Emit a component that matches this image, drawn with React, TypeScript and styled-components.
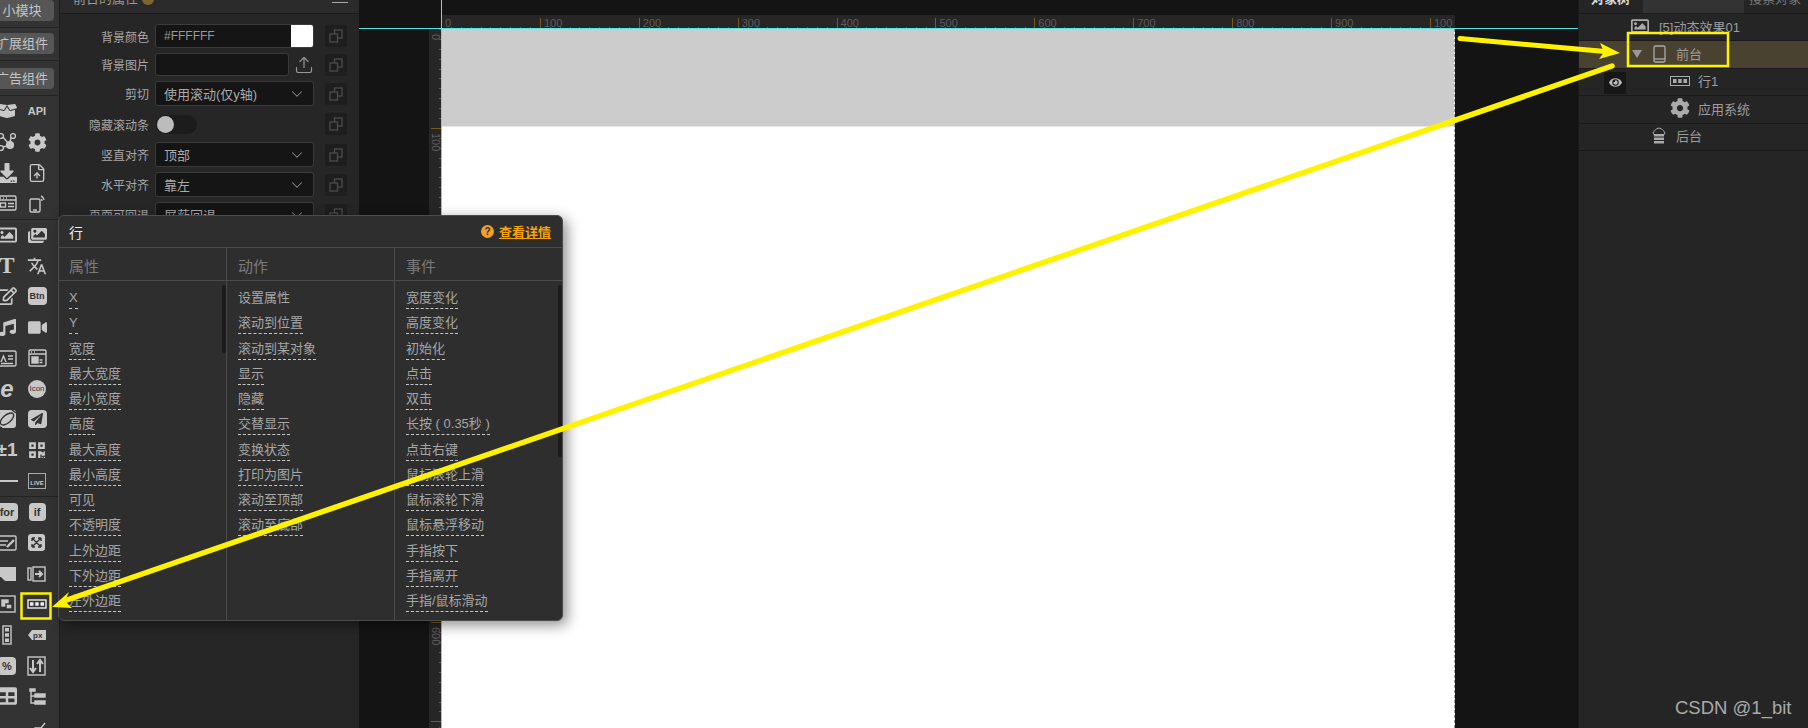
import React from "react";
import styled, { createGlobalStyle } from "styled-components";
import { ChevronDown, Upload, FileUp } from "lucide-react";
import {
  FaBoxOpen,
  FaCog,
  FaDownload,
  FaRegImage,
  FaImages,
  FaRegEdit,
  FaMusic,
  FaVideo,
  FaPaperPlane,
  FaQrcode,
  FaTable,
  FaEye,
} from "react-icons/fa";
import { MdTranslate } from "react-icons/md";

const FONT = `"Liberation Sans", "Noto Sans CJK SC", sans-serif`;
const YELLOW = "#fff200";

const GlobalStyle = createGlobalStyle`
  html, body {
    margin: 0;
    padding: 0;
    background: #141414;
    overflow: hidden;
  }
  * { box-sizing: border-box; }
`;

const Page = styled.div`
  position: relative;
  width: 1808px;
  height: 728px;
  display: flex;
  overflow: hidden;
  font-family: ${FONT};
  font-size: 13px;
`;

/* left toolbar */
const Toolbar = styled.div`
  width: 59px;
  flex: none;
  background: #333;
  overflow: hidden;
`;

const ModuleButton = styled.div`
  margin: 0 5px 6px -10px;
  height: 21px;
  background: #565656;
  border-radius: 4px;
  color: #c4c4c4;
  font-size: 13px;
  line-height: 21px;
  text-align: center;
  white-space: nowrap;
`;

const Separator = styled.div<{ $after?: number }>`
  height: 1px;
  width: 58px;
  background: #232323;
  margin-bottom: ${(p) => p.$after ?? 0}px;
`;

const IconGrid = styled.div`
  display: grid;
  grid-template-columns: 30px 30px;
  grid-auto-rows: 30.7px;
  margin-left: -8px;
  color: #c8c8c8;
`;

const IconCell = styled.div`
  display: flex;
  align-items: center;
  justify-content: center;
  min-width: 0;
  overflow: visible;
  svg { display: block; flex: none; }
`;

const Pill = styled.span<{ $w: number; $size?: number }>`
  display: block;
  width: ${(p) => p.$w}px;
  height: 18px;
  background: #c8c8c8;
  border-radius: 4px;
  color: #333;
  font-size: ${(p) => p.$size ?? 11}px;
  font-weight: bold;
  line-height: 18px;
  text-align: center;
  white-space: nowrap;
  flex: none;
`;

const BoldGlyph = styled.span<{ $size: number; $serif?: boolean }>`
  font-family: ${(p) => (p.$serif ? `"Liberation Serif", serif` : `"Liberation Sans", sans-serif`)};
  font-size: ${(p) => p.$size}px;
  font-weight: bold;
  line-height: 1;
  white-space: nowrap;
`;

const RoundLabel = styled.span`
  width: 18px;
  height: 18px;
  border-radius: 50%;
  background: #c8c8c8;
  color: #333;
  font-size: 8px;
  line-height: 18px;
  text-align: center;
  flex: none;
`;

const LiveBox = styled.span`
  width: 18px;
  height: 16px;
  border: 1px solid #aaa;
  color: #ccc;
  font-size: 6px;
  font-weight: bold;
  line-height: 18px;
  text-align: center;
  flex: none;
`;

const LineGlyph = styled.span`
  width: 22px;
  height: 2px;
  background: #c8c8c8;
  flex: none;
`;

const S = ({ children, w = 20, h = 20, vb = "0 0 20 20" }: { children: React.ReactNode; w?: number; h?: number; vb?: string }) => (
  <svg width={w} height={h} viewBox={vb} fill="none" stroke="currentColor" strokeWidth="1.4">
    {children}
  </svg>
);

const toolbarTop: React.ReactNode[] = [
  <FaBoxOpen size={20} />,
  <BoldGlyph $size={11}>API</BoldGlyph>,
  <S>
    <circle cx="4" cy="4" r="2.4" />
    <circle cx="16" cy="4" r="2.4" />
    <circle cx="4" cy="16" r="2.4" />
    <circle cx="13" cy="13" r="3.4" fill="currentColor" />
    <path d="M6 5l5 6M14 6l-1 4M6 15l4-1" />
  </S>,
  <FaCog size={19} />,
  <FaDownload size={20} />,
  <FileUp size={20} strokeWidth={1.6} />,
  <S>
    <rect x="1" y="3" width="18" height="14" rx="1.5" />
    <path d="M1 7h18M3 5h1M6 5h1M9 5h1" />
    <rect x="3.5" y="10" width="5" height="4" />
    <path d="M11 10.5h6M11 13.5h6" />
  </S>,
  <S>
    <rect x="3" y="6" width="10" height="13" rx="1.5" />
    <path d="M6 17h4M14 3a5 5 0 0 1 3 4M14 6a2 2 0 0 1 1 2" />
  </S>,
];

const toolbarMiddle: React.ReactNode[] = [
  <FaRegImage size={20} />,
  <FaImages size={19} />,
  <BoldGlyph $size={23} $serif>T</BoldGlyph>,
  <MdTranslate size={20} />,
  <FaRegEdit size={20} />,
  <Pill $w={19} $size={9}>Btn</Pill>,
  <FaMusic size={17} />,
  <FaVideo size={19} />,
  <S>
    <rect x="1" y="3" width="18" height="15" rx="1.5" />
    <path d="M4 14l2.5-6 2.5 6M11 8h5M11 11h5M4 15.5h12" />
  </S>,
  <S>
    <rect x="2" y="2" width="17" height="16" rx="1.5" />
    <path d="M2 6h17M4 4h1M7 4h1" />
    <rect x="5" y="9" width="6" height="6" fill="currentColor" />
    <path d="M12.5 12h3M12.5 14.5h3" />
  </S>,
  <BoldGlyph $size={24}>
    <i>e</i>
  </BoldGlyph>,
  <RoundLabel>Icon</RoundLabel>,
  <S>
    <rect x="1" y="1" width="18" height="18" rx="3" fill="currentColor" stroke="none" />
    <ellipse cx="10" cy="10" rx="8" ry="4" transform="rotate(-40 10 10)" stroke="#333" />
    <path d="M1 17L5 19M15 1l4 3" stroke="#333" />
  </S>,
  <Pill $w={19}>
    <FaPaperPlane size={12} style={{ marginTop: 3, marginLeft: 3 }} color="#333" />
  </Pill>,
  <BoldGlyph $size={19}>±1</BoldGlyph>,
  <FaQrcode size={18} />,
  <LineGlyph />,
  <LiveBox>LIVE</LiveBox>,
];

const toolbarBottom: React.ReactNode[] = [
  <Pill $w={22}>for</Pill>,
  <Pill $w={17}>if</Pill>,
  <S>
    <rect x="1" y="3" width="18" height="14" rx="1" />
    <path d="M3 8h8M3 12h6" />
    <path d="M10 14l7-7" strokeWidth="2.4" />
  </S>,
  <S>
    <rect x="1" y="1" width="17" height="17" rx="3" fill="currentColor" stroke="none" />
    <path d="M5 5l9 9M14 5l-9 9M5 5h3M5 5v3M14 14h-3M14 14v-3M14 5h-3M14 5v3M5 14h3M5 14v-3" stroke="#333" />
  </S>,
  <S>
    <path d="M1 3h18v14H8l-4-4H1z" fill="currentColor" stroke="none" />
  </S>,
  <S>
    <rect x="1" y="4" width="3" height="12" />
    <rect x="6" y="3" width="12" height="14" />
    <path d="M8 10h6M12 7l3 3-3 3" strokeWidth="2" />
  </S>,
  <S>
    <rect x="1" y="2" width="17" height="16" />
    <rect x="5" y="6" width="6" height="6" fill="currentColor" />
    <rect x="9" y="10" width="6" height="5" fill="currentColor" stroke="#333" />
  </S>,
  <S w={20} h={10} vb="0 0 20 10">
    <rect x="1" y="1" width="18" height="8" stroke="#eee" />
    <path d="M3 5h3.5M8.2 5h3.5M13.5 5h3.5" stroke="#eee" strokeWidth="3.4" />
  </S>,
  <S w={10} h={20} vb="0 0 10 20">
    <rect x="1" y="1" width="8" height="18" />
    <path d="M5 3v3.5M5 8.2v3.5M5 13.5v3.5" strokeWidth="4" />
  </S>,
  <S>
    <path d="M1 10l4-5h14v10H5z" fill="currentColor" stroke="none" />
    <text x="6" y="13" fontSize="8" fontWeight="bold" fill="#333" stroke="none">px</text>
  </S>,
  <Pill $w={18}>%</Pill>,
  <S>
    <rect x="1" y="1" width="17" height="18" />
    <path d="M6 4v12M3 12l3 4 3-4M13 16V4M10 8l3-4 3 4" strokeWidth="2" />
  </S>,
  <FaTable size={20} />,
  <S>
    <path d="M3 3h5v2H3zM8 8h10v3H8zM8 15h10v3H8z" fill="currentColor" />
    <path d="M4 5v12h4M4 10h4" />
  </S>,
  <span />,
  <S>
    <path d="M2 18l6-7h6l4-5" />
  </S>,
];

/* property panel */
const PropPanel = styled.div`
  width: 300px;
  flex: none;
  background: #262626;
  border-left: 1px solid #1d1d1d;
`;

const PanelHeader = styled.div`
  height: 14px;
  background: #2b2b2b;
  border-bottom: 1px solid #1a1a1a;
  display: flex;
  align-items: flex-end;
  overflow: hidden;
  padding: 0 11px 5px 13px;
  color: #999;
`;

const PanelTitle = styled.span`
  flex: 1;
  display: flex;
  align-items: center;
  gap: 4px;
  line-height: 18px;
  white-space: nowrap;
`;

const TitleBadge = styled.span`
  width: 12px;
  height: 12px;
  border-radius: 50%;
  background: #7f6530;
`;

const MenuLines = styled.span`
  align-self: flex-start;
  width: 16px;
  height: 3px;
  border-bottom: 1px solid #aaa;
`;

const PropList = styled.div`
  padding-top: 10px;
  display: flex;
  flex-direction: column;
  gap: 5px;
`;

const PropRow = styled.div<{ $h: number }>`
  height: ${(p) => p.$h}px;
  display: flex;
  align-items: center;
`;

const PropLabel = styled.label`
  width: 89px;
  margin-right: 6px;
  text-align: right;
  color: #a8a8a8;
  font-size: 12px;
  white-space: nowrap;
`;

const Field = styled.div<{ $w?: number }>`
  width: ${(p) => p.$w ?? 159}px;
  height: 100%;
  flex: none;
  background: #151515;
  border: 1px solid #3a3a3a;
  border-radius: 3px;
  color: #aaa;
  display: flex;
  align-items: center;
  padding-left: 8px;
  overflow: hidden;
`;

const HexText = styled.span`
  flex: 1;
  font-size: 12px;
  color: #999;
`;

const Swatch = styled.span`
  width: 22px;
  height: 100%;
  background: #fff;
`;

const SelectText = styled.span`
  flex: 1;
  white-space: nowrap;
`;

const Chevron = styled(ChevronDown)`
  color: #888;
  margin-right: 7px;
`;

const UploadButton = styled.div`
  width: 25px;
  flex: none;
  display: flex;
  justify-content: flex-end;
  color: #999;
`;

const Toggle = styled.div`
  width: 41px;
  height: 19px;
  flex: none;
  margin-left: 1px;
  padding: 1px;
  border-radius: 10px;
  background: #1c1c1c;
`;

const ToggleKnob = styled.div`
  width: 17px;
  height: 17px;
  border-radius: 50%;
  background: #bcbcbc;
`;

const RowSpacer = styled.div`
  width: 117px;
  flex: none;
`;

const CopyBox = styled.div`
  width: 22px;
  height: 22px;
  margin-left: 11px;
  flex: none;
  background: #1e1e1e;
  border-radius: 3px;
  color: #4c4c4c;
  display: flex;
  align-items: center;
  justify-content: center;
`;

const CopyIcon = () => (
  <CopyBox>
    <svg width="14" height="14" viewBox="0 0 14 14" fill="none" stroke="currentColor" strokeWidth="1.3">
      <rect x="5.5" y="1" width="7.5" height="8" />
      <rect x="1" y="5" width="7.5" height="8" fill="#1e1e1e" />
    </svg>
  </CopyBox>
);

/* canvas */
const Canvas = styled.div`
  position: relative;
  width: 1219px;
  flex: none;
  background: #141414;
  display: grid;
  grid-template-columns: 70px 12px 1014px 1fr;
  grid-template-rows: 15px 14px 1fr;
  overflow: hidden;
`;

const RulerTop = styled.div`
  grid-column: 3;
  grid-row: 2;
  display: flex;
  overflow: hidden;
  background-color: #262626;
  background-image: repeating-linear-gradient(90deg, #5a5a5a 0 1px, transparent 1px 9.89px);
  background-size: 100% 2px;
  background-position: bottom;
  background-repeat: no-repeat;
`;

const RulerTopCell = styled.div`
  width: 98.9px;
  flex: none;
  height: 10px;
  margin-top: 3px;
  border-left: 1px solid #7a5a1c;
  padding-left: 3px;
  color: #5c5c5c;
  font-size: 11px;
  line-height: 10px;
`;

const RulerLeft = styled.div`
  grid-column: 2;
  grid-row: 3;
  overflow: hidden;
  background-color: #262626;
  background-image: repeating-linear-gradient(180deg, #5a5a5a 0 1px, transparent 1px 9.89px);
  background-size: 2px 100%;
  background-position: right;
  background-repeat: no-repeat;
`;

const RulerLeftCell = styled.div`
  height: 98.9px;
  margin-left: 2px;
  border-top: 1px solid #7a5a1c;
  padding-top: 4px;
  color: #5c5c5c;
  font-size: 11px;
  line-height: 10px;
  writing-mode: vertical-rl;

  &:first-child {
    border-top-color: transparent;
  }
`;

const Sheet = styled.div`
  grid-column: 3;
  grid-row: 3;
  background: #fff;
  border-left: 1px dashed #999;
  border-right: 1px dashed #999;
`;

const SheetTop = styled.div`
  height: 98px;
  background: #ccc;
  border-bottom: 1px solid #e8e8e8;
`;

const GuideH = styled.div`
  position: absolute;
  left: 0;
  right: 0;
  top: 28px;
  height: 1px;
  background: #4fe6e6;
`;

const GuideV = styled.div`
  position: absolute;
  left: 82px;
  top: 0;
  bottom: 0;
  width: 1px;
  background: #4fe6e6;
`;

/* object tree */
const TreePanel = styled.div`
  flex: 1;
  background: #252525;
  border-left: 1px solid #1a1a1a;
`;

const TreeTabs = styled.div`
  height: 14px;
  display: flex;
  border-bottom: 1px solid #1a1a1a;
  overflow: hidden;
`;

const TreeTab = styled.div<{ $w?: number; $bg: string; $color: string; $pad: number }>`
  ${(p) => (p.$w ? `width: ${p.$w}px;` : "flex: 1;")}
  background: ${(p) => p.$bg};
  color: ${(p) => p.$color};
  display: flex;
  align-items: flex-end;
  padding: 0 0 5px ${(p) => p.$pad}px;
  line-height: 18px;
  white-space: nowrap;
  font-weight: ${(p) => (p.$w === 64 ? "bold" : "normal")};
`;

const TreeRow = styled.div<{ $indent: number; $selected?: boolean }>`
  position: relative;
  height: 27.4px;
  display: flex;
  align-items: center;
  padding: 0 0 2px ${(p) => p.$indent}px;
  gap: 8px;
  background: ${(p) => (p.$selected ? "#4a4230" : "transparent")};
  border-bottom: 1px solid #1a1a1a;
  color: #9c9c9c;
  white-space: nowrap;
`;

const TreeIcon = styled.span<{ $w: number }>`
  width: ${(p) => p.$w}px;
  display: flex;
  justify-content: center;
  color: #aaa;
  flex: none;
`;

const Triangle = styled.span`
  width: 0;
  height: 0;
  border-left: 5px solid transparent;
  border-right: 5px solid transparent;
  border-top: 8px solid #999;
`;

const EyeBadge = styled.span`
  position: absolute;
  left: 25px;
  top: 3px;
  width: 22px;
  height: 22px;
  background: #171717;
  color: #bbb;
  display: flex;
  align-items: center;
  justify-content: center;
`;

/* popup */
const Popup = styled.div`
  position: absolute;
  left: 58px;
  top: 215px;
  width: 505px;
  height: 406px;
  background: #2e2e2e;
  border: 1px solid #4c4c4c;
  border-radius: 6px;
  box-shadow: 4px 4px 14px rgba(0, 0, 0, 0.45);
  display: flex;
  flex-direction: column;
`;

const PopupHeader = styled.div`
  height: 32px;
  flex: none;
  padding: 0 11px 0 10px;
  display: flex;
  align-items: center;
  justify-content: space-between;
  border-bottom: 1px solid #4a4a4a;
  color: #eee;
  font-size: 14px;
`;

const DetailLink = styled.a`
  display: flex;
  align-items: center;
  gap: 5px;
  color: #f7a30b;
  font-size: 13px;
  font-weight: bold;
  text-decoration: underline;
`;

const HelpDot = styled.span`
  width: 13px;
  height: 13px;
  border-radius: 50%;
  background: #f0a030;
  color: #2e2e2e;
  font-size: 10px;
  font-weight: bold;
  line-height: 13px;
  text-align: center;
`;

const PopupColumns = styled.div`
  flex: 1;
  display: grid;
  grid-template-columns: 167px 168px 1fr;
`;

const PopupColumn = styled.div`
  position: relative;
  border-left: 1px solid #4a4a4a;

  &:first-child {
    border-left: 0;
  }
`;

const ColumnHead = styled.div<{ $first?: boolean }>`
  height: 33px;
  padding-left: ${(p) => (p.$first ? 10 : 11)}px;
  border-bottom: 1px solid #4a4a4a;
  color: #7a7a7a;
  font-size: 15px;
  line-height: 37px;
`;

const ItemList = styled.ul<{ $first?: boolean }>`
  margin: 0;
  padding: 6px 0 0 ${(p) => (p.$first ? 10 : 11)}px;
  list-style: none;
`;

const Item = styled.li`
  height: 25.25px;
`;

const ItemText = styled.span<{ $plain?: boolean }>`
  display: inline-block;
  height: 22px;
  line-height: 21px;
  color: #a6a6a6;
  white-space: nowrap;
  border-bottom: 1px dashed ${(p) => (p.$plain ? "transparent" : "#c8c8c8")};
`;

const ScrollThumb = styled.div<{ $height: number }>`
  position: absolute;
  right: 0;
  top: 37px;
  width: 4px;
  height: ${(p) => p.$height}px;
  border-radius: 2px;
  background: #1c1c1c;
`;

/* annotations */
const Overlay = styled.svg`
  position: absolute;
  left: 0;
  top: 0;
  pointer-events: none;
`;

const Watermark = styled.div`
  position: absolute;
  left: 1675px;
  top: 698px;
  color: #aaa;
  font-family: "Liberation Sans", sans-serif;
  font-size: 18.5px;
  line-height: 20px;
`;

const rulerMarks = [0, 100, 200, 300, 400, 500, 600, 700, 800, 900, 100];
const rulerLeftMarks = [0, 100, 200, 300, 400, 500, 600, 700];

const attrs = ["X", "Y", "宽度", "最大宽度", "最小宽度", "高度", "最大高度", "最小高度", "可见", "不透明度", "上外边距", "下外边距", "左外边距"];
const actions = ["设置属性", "滚动到位置", "滚动到某对象", "显示", "隐藏", "交替显示", "变换状态", "打印为图片", "滚动至顶部", "滚动至底部"];
const events = ["宽度变化", "高度变化", "初始化", "点击", "双击", "长按 ( 0.35秒 )", "点击右键", "鼠标滚轮上滑", "鼠标滚轮下滑", "鼠标悬浮移动", "手指按下", "手指离开", "手指/鼠标滑动"];

const selects: [string, string][] = [
  ["竖直对齐", "顶部"],
  ["水平对齐", "靠左"],
  ["页面可回退", "屏蔽回退"],
];

export default function App() {
  return (
    <Page>
      <GlobalStyle />
      <Toolbar>
        <ModuleButton>小模块</ModuleButton>
        <Separator $after={5} />
        <ModuleButton>扩展组件</ModuleButton>
        <Separator $after={7} />
        <ModuleButton>广告组件</ModuleButton>
        <Separator />
        <IconGrid>
          {toolbarTop.map((icon, i) => (
            <IconCell key={i}>{icon}</IconCell>
          ))}
        </IconGrid>
        <Separator />
        <IconGrid>
          {toolbarMiddle.map((icon, i) => (
            <IconCell key={i}>{icon}</IconCell>
          ))}
        </IconGrid>
        <Separator />
        <IconGrid>
          {toolbarBottom.map((icon, i) => (
            <IconCell key={i}>{icon}</IconCell>
          ))}
        </IconGrid>
      </Toolbar>

      <PropPanel>
        <PanelHeader>
          <PanelTitle>
            前台的属性
            <TitleBadge />
          </PanelTitle>
          <MenuLines />
        </PanelHeader>
        <PropList>
          <PropRow $h={24}>
            <PropLabel>背景颜色</PropLabel>
            <Field>
              <HexText>#FFFFFF</HexText>
              <Swatch />
            </Field>
            <CopyIcon />
          </PropRow>
          <PropRow $h={23}>
            <PropLabel>背景图片</PropLabel>
            <Field $w={134} />
            <UploadButton>
              <Upload size={20} strokeWidth={1.4} />
            </UploadButton>
            <CopyIcon />
          </PropRow>
          <PropRow $h={25}>
            <PropLabel>剪切</PropLabel>
            <Field>
              <SelectText>使用滚动(仅y轴)</SelectText>
              <Chevron size={18} strokeWidth={1.4} />
            </Field>
            <CopyIcon />
          </PropRow>
          <PropRow $h={26}>
            <PropLabel>隐藏滚动条</PropLabel>
            <Toggle>
              <ToggleKnob />
            </Toggle>
            <RowSpacer />
            <CopyIcon />
          </PropRow>
          {selects.map(([label, value]) => (
            <PropRow $h={25} key={label}>
              <PropLabel>{label}</PropLabel>
              <Field>
                <SelectText>{value}</SelectText>
                <Chevron size={18} strokeWidth={1.4} />
              </Field>
              <CopyIcon />
            </PropRow>
          ))}
        </PropList>
      </PropPanel>

      <Canvas>
        <RulerTop>
          {rulerMarks.map((n, i) => (
            <RulerTopCell key={i}>{n}</RulerTopCell>
          ))}
        </RulerTop>
        <RulerLeft>
          {rulerLeftMarks.map((n) => (
            <RulerLeftCell key={n}>{n}</RulerLeftCell>
          ))}
        </RulerLeft>
        <Sheet>
          <SheetTop />
        </Sheet>
        <GuideH />
        <GuideV />
      </Canvas>

      <TreePanel>
        <TreeTabs>
          <TreeTab $w={64} $bg="#252525" $color="#ddd" $pad={12}>对象树</TreeTab>
          <TreeTab $w={101} $bg="#333" $color="#999" $pad={0} />
          <TreeTab $bg="#252525" $color="#777" $pad={5}>搜索对象</TreeTab>
        </TreeTabs>
        <TreeRow $indent={50}>
          <TreeIcon $w={22}>
            <FaRegImage size={18} />
          </TreeIcon>
          [5]动态效果01
        </TreeRow>
        <TreeRow $indent={53} $selected>
          <Triangle />
          <TreeIcon $w={18}>
            <svg width="13" height="18" viewBox="0 0 13 18" fill="none" stroke="currentColor" strokeWidth="1.3">
              <rect x="1" y="1" width="11" height="16" rx="1.5" />
              <path d="M1 14h11" />
            </svg>
          </TreeIcon>
          前台
        </TreeRow>
        <TreeRow $indent={91}>
          <EyeBadge>
            <FaEye size={13} />
          </EyeBadge>
          <TreeIcon $w={20}>
            <svg width="20" height="10" viewBox="0 0 20 10" fill="none" stroke="currentColor">
              <rect x="0.5" y="0.5" width="19" height="9" />
              <path d="M3 5h3.5M8.2 5h3.5M13.5 5h3.5" strokeWidth="4" />
            </svg>
          </TreeIcon>
          行1
        </TreeRow>
        <TreeRow $indent={91}>
          <TreeIcon $w={20}>
            <FaCog size={20} />
          </TreeIcon>
          应用系统
        </TreeRow>
        <TreeRow $indent={71}>
          <TreeIcon $w={18}>
            <svg width="16" height="17" viewBox="0 0 16 17" fill="none" stroke="currentColor">
              <path d="M2.500 7.500a3 3 0 0 1 1.500-4 4.500 4.500 0 0 1 8 0 3 3 0 0 1 1.500 4" />
              <path d="M3 7h10v2.500H3zM3 10.500h10V13H3zM3 14h10v2.500H3z" fill="currentColor" stroke="none" />
            </svg>
          </TreeIcon>
          后台
        </TreeRow>
      </TreePanel>

      <Popup>
        <PopupHeader>
          行
          <DetailLink>
            <HelpDot>?</HelpDot>
            查看详情
          </DetailLink>
        </PopupHeader>
        <PopupColumns>
          <PopupColumn>
            <ColumnHead $first>属性</ColumnHead>
            <ScrollThumb $height={68} />
            <ItemList $first>
              {attrs.map((t) => (
                <Item key={t}>
                  <ItemText>{t}</ItemText>
                </Item>
              ))}
            </ItemList>
          </PopupColumn>
          <PopupColumn>
            <ColumnHead>动作</ColumnHead>
            <ItemList>
              {actions.map((t, i) => (
                <Item key={t}>
                  <ItemText $plain={i === 0}>{t}</ItemText>
                </Item>
              ))}
            </ItemList>
          </PopupColumn>
          <PopupColumn>
            <ColumnHead>事件</ColumnHead>
            <ScrollThumb $height={172} />
            <ItemList>
              {events.map((t) => (
                <Item key={t}>
                  <ItemText>{t}</ItemText>
                </Item>
              ))}
            </ItemList>
          </PopupColumn>
        </PopupColumns>
      </Popup>

      <Overlay width="1808" height="728" viewBox="0 0 1808 728">
        <g fill="none" stroke={YELLOW}>
          <rect x="21.500" y="593.500" width="29" height="25" strokeWidth="2.500" />
          <rect x="1628" y="33" width="100" height="33" strokeWidth="2.500" />
          <path d="M1460 38.500L1605 51.500" strokeWidth="5" strokeLinecap="round" />
          <path d="M1612 66L64 601" strokeWidth="5.500" strokeLinecap="round" />
        </g>
        <g fill={YELLOW}>
          <path d="M1620 53L1600 43L1604 52L1599 59Z" />
          <path d="M52 607L69 592L65 601L72 608Z" />
        </g>
      </Overlay>
      <Watermark>CSDN @1_bit</Watermark>
    </Page>
  );
}
